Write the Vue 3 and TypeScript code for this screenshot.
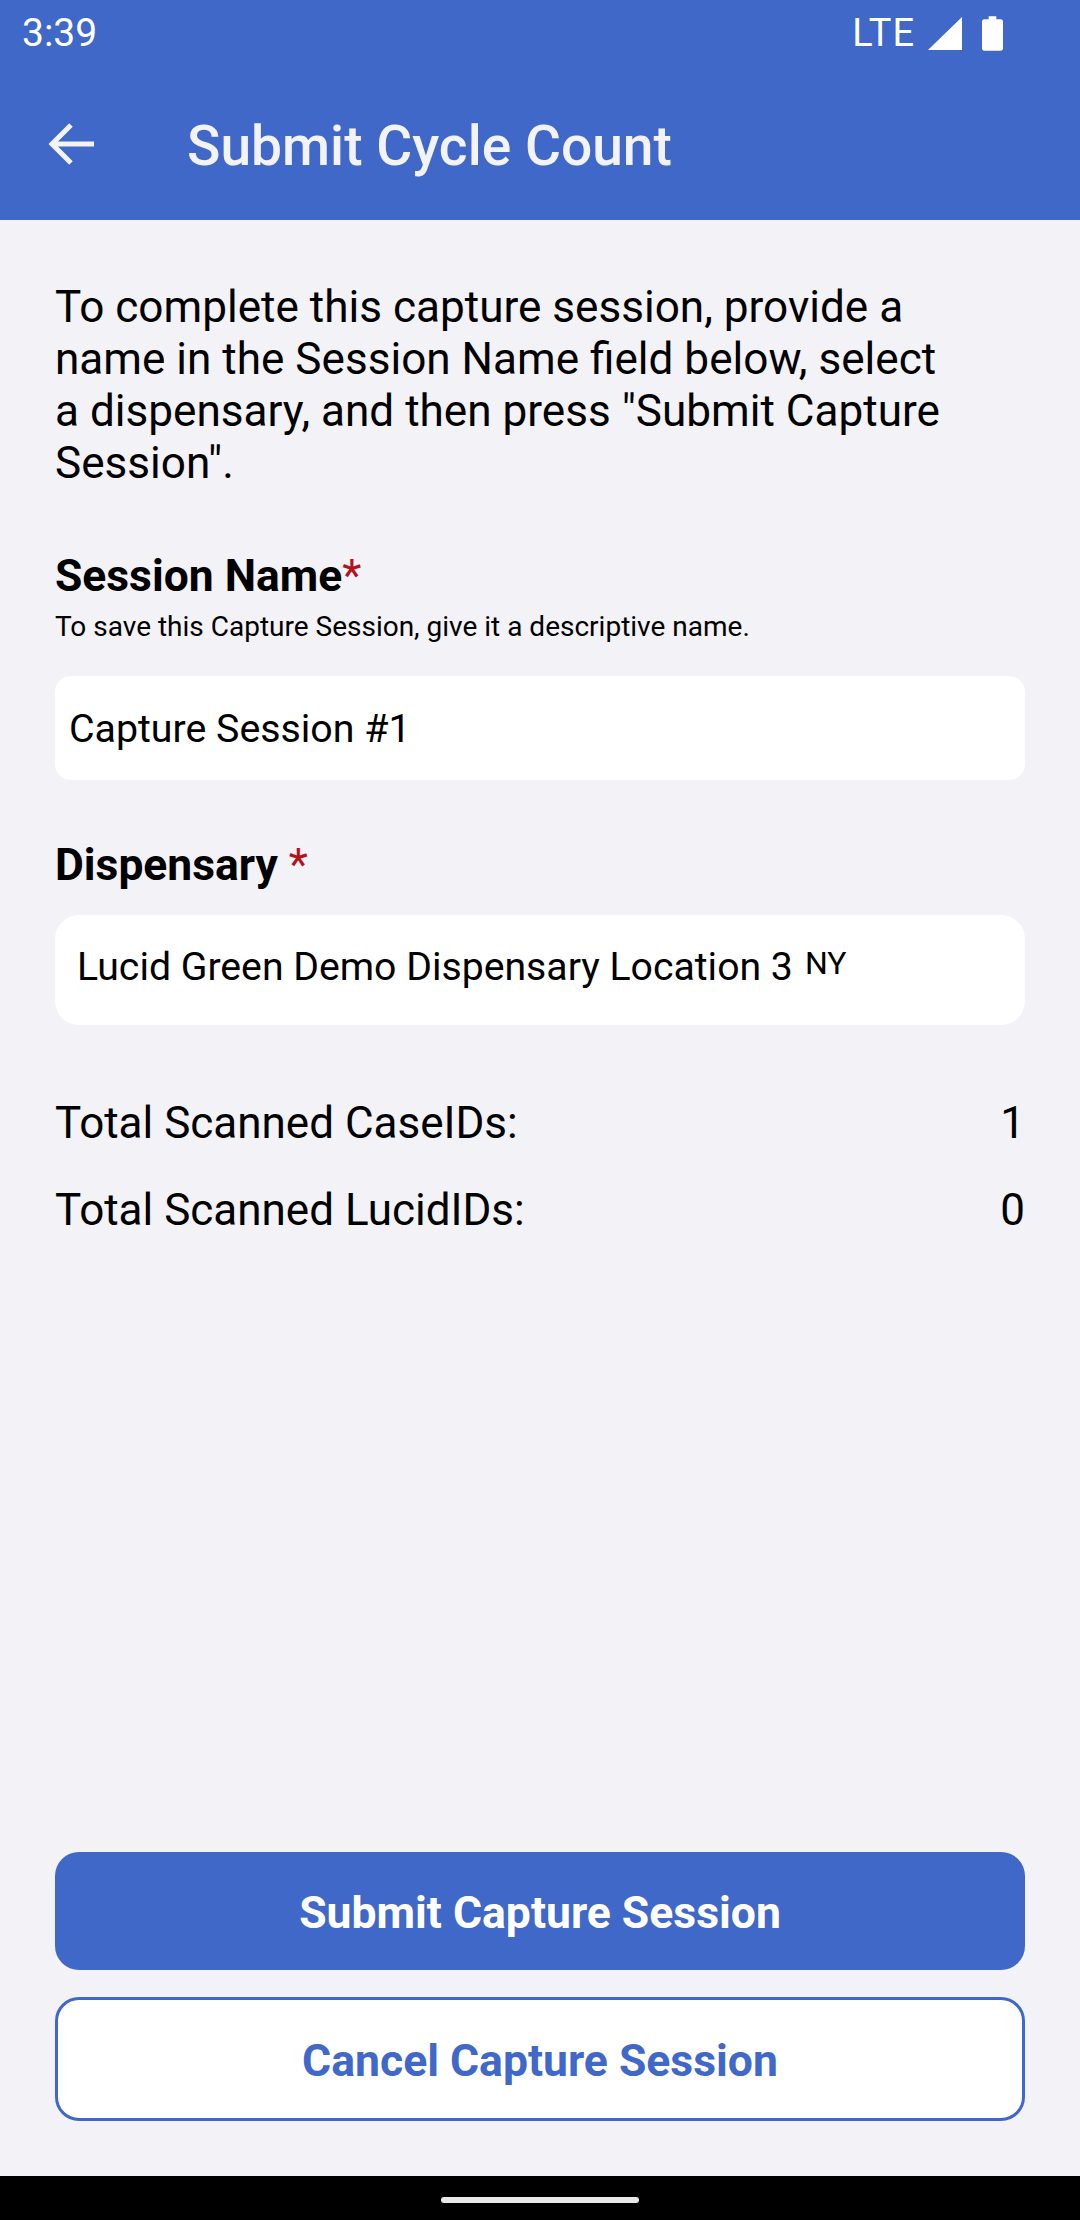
<script setup lang="ts">
const intro = 'To complete this capture session, provide a name in the Session Name field below, select a dispensary, and then press "Submit Capture Session".'
const totals = [
  { label: 'Total Scanned CaseIDs:', value: 1 },
  { label: 'Total Scanned LucidIDs:', value: 0 },
]
</script>

<template>
  <div class="screen">
    <header class="top">
      <div class="status">
        <span class="time">3:39</span>
        <div class="status-right">
          <span class="lte">LTE</span>
          <svg class="signal" width="34" height="33" viewBox="0 0 34 33"><path d="M34 0V33H0Z" fill="#fff" /></svg>
          <svg class="battery" width="21" height="35" viewBox="0 0 22 36"><path d="M7 0H15V3H19.5C21 3 22 4 22 5.500V33.500C22 35 21 36 19.500 36H2.500C1 36 0 35 0 33.500V5.500C0 4 1 3 2.500 3H7Z" fill="#fff" /></svg>
        </div>
      </div>
      <div class="bar">
        <svg class="back" width="46" height="42" viewBox="0 0 46 42" fill="none" stroke="#f2f2f7" stroke-width="5">
          <path d="M46 21H5" />
          <path d="M23 2L4 21L23 40" />
        </svg>
        <h1 class="title">Submit Cycle Count</h1>
      </div>
    </header>

    <main class="content">
      <p class="intro">{{ intro }}</p>

      <section class="session">
        <h2 class="label">Session Name<span class="req">*</span></h2>
        <p class="hint">To save this Capture Session, give it a descriptive name.</p>
        <div class="input">Capture Session #1</div>
      </section>

      <section class="dispensary">
        <h2 class="label">Dispensary <span class="req">*</span></h2>
        <div class="select">
          <span>Lucid Green Demo Dispensary Location 3</span>
          <span class="state">NY</span>
        </div>
      </section>

      <section class="totals">
        <div v-for="t in totals" :key="t.label" class="total">
          <span>{{ t.label }}</span>
          <span>{{ t.value }}</span>
        </div>
      </section>

      <div class="actions">
        <button class="btn primary" type="button">Submit Capture Session</button>
        <button class="btn outline" type="button">Cancel Capture Session</button>
      </div>
    </main>

    <footer class="nav"><span class="pill"></span></footer>
  </div>
</template>

<style>
html, body { margin: 0; padding: 0; background: #f2f2f7; }
</style>

<style scoped>
.screen {
  width: 1080px;
  height: 2220px;
  display: flex;
  flex-direction: column;
  background: #f2f2f7;
  font-family: Roboto, "Liberation Sans", sans-serif;
  color: #000;
  overflow: hidden;
}
.top {
  height: 220px;
  flex: none;
  background: #3f68c9;
  color: #fff;
}
.status {
  height: 66px;
  display: flex;
  justify-content: space-between;
  align-items: center;
  padding: 0 77px 0 22px;
}
.time { font-size: 39px; line-height: 66px; }
.status-right { display: flex; align-items: center; }
.lte { font-size: 38px; letter-spacing: 1px; margin-right: 13px; }
.signal { margin-right: 20px; }
.bar {
  height: 154px;
  display: flex;
  align-items: center;
  padding: 2px 0 0 48px;
  box-sizing: border-box;
}
.title {
  margin: 4px 0 0 93px;
  font-size: 55.150px;
  font-weight: 500;
  color: #f2f2f7;
}
.content {
  flex: 1;
  display: flex;
  flex-direction: column;
  padding: 0 55px;
}
.intro {
  margin: 61px 70px 0 0;
  font-size: 44.100px;
  line-height: 52px;
}
.session { margin-top: 59px; }
.label {
  margin: 0;
  font-size: 44.400px;
  line-height: 56px;
  font-weight: 700;
}
.req { color: #b5121b; font-weight: 400; }
.hint {
  margin: 6px 0 0;
  font-size: 28px;
  line-height: 34px;
}
.input {
  margin-top: 32px;
  height: 104px;
  box-sizing: border-box;
  padding: 2px 14px 0;
  display: flex;
  align-items: center;
  background: #fff;
  border-radius: 16px;
  font-size: 39.300px;
}
.dispensary { margin-top: 57px; }
.select {
  margin-top: 22px;
  height: 110px;
  box-sizing: border-box;
  padding: 0 22px 7px;
  display: flex;
  align-items: center;
  gap: 12px;
  background: #fff;
  border-radius: 24px;
  font-size: 39.200px;
}
.state { font-size: 32px; margin-bottom: 8px; }
.totals {
  margin-top: 69px;
  display: flex;
  flex-direction: column;
  gap: 28px;
}
.total {
  display: flex;
  justify-content: space-between;
  font-size: 44px;
  line-height: 59px;
}
.actions {
  margin-top: auto;
  margin-bottom: 55px;
  display: flex;
  flex-direction: column;
  gap: 27px;
}
.btn {
  display: block;
  width: 100%;
  box-sizing: border-box;
  font-family: inherit;
  font-size: 44.500px;
  font-weight: 700;
  border-radius: 24px;
  padding: 4px 0 0;
}
.primary {
  height: 118px;
  background: #3f68c9;
  color: #fff;
  border: none;
}
.outline {
  height: 124px;
  background: #fff;
  color: #3f68c9;
  border: 3px solid #3f68c9;
}
.nav {
  height: 44px;
  flex: none;
  background: #000;
  display: flex;
  justify-content: center;
  padding-top: 21px;
  box-sizing: border-box;
}
.pill {
  width: 198px;
  height: 6px;
  border-radius: 3px;
  background: #e8e8e8;
}
</style>
